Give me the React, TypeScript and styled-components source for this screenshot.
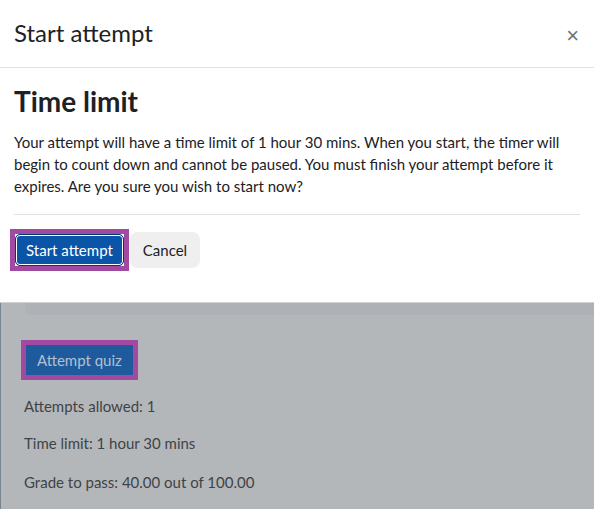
import React from "react";
import styled, { createGlobalStyle } from "styled-components";

const Global = createGlobalStyle`
  html, body { margin: 0; padding: 0; background: #ffffff; }
  body { font-family: Lato, "Noto Sans", "Liberation Sans", sans-serif; color: #1d2125; }
  * { box-sizing: border-box; }
`;

const Page = styled.div`
  width: 594px;
  height: 509px;
  display: flex;
  flex-direction: column;
  overflow: hidden;
`;

const Dialog = styled.div`
  background: #ffffff;
  display: flex;
  flex-direction: column;
  border-bottom: 1px solid #cfd1d3;
`;

const Header = styled.div`
  height: 68px;
  padding: 0 14px;
  display: flex;
  align-items: center;
  justify-content: space-between;
  border-bottom: 1px solid #dee2e6;
`;

const Title = styled.h5`
  margin: 0;
  font-size: 24px;
  font-weight: 400;
  color: #1d2125;
  line-height: 1.2;
  padding-bottom: 1px;
`;

const Close = styled.button`
  border: 0;
  background: transparent;
  color: #6a737b;
  font-size: 22px;
  line-height: 1;
  padding: 0;
  margin-right: 1px;
  margin-top: 5px;
  font-family: "Liberation Sans", sans-serif;
  cursor: pointer;
`;

const Body = styled.div`
  padding: 17px 14px 31px;
  display: flex;
  flex-direction: column;
`;

const Heading = styled.h3`
  margin: 0 0 12px;
  font-size: 28px;
  font-weight: 700;
  line-height: 1.2;
  color: #1d2125;
`;

const Text = styled.p`
  margin: 0;
  font-size: 15px;
  line-height: 22px;
  color: #1d2125;
`;

const Rule = styled.hr`
  margin: 17px 0 14px;
  border: 0;
  border-top: 1px solid #dee2e6;
`;

const Actions = styled.div`
  display: flex;
  align-items: center;
  margin-left: -4px;
`;

const FocusMark = styled.div`
  border: 5px solid #a04aa2;
  display: inline-flex;
`;

const PrimaryButton = styled.button`
  height: 32px;
  padding: 0 10px;
  background: #0b55a8;
  color: #ffffff;
  border: 1px solid #0a3570;
  box-shadow: inset 0 0 0 1px #ffffff;
  border-radius: 5px;
  font-family: inherit;
  font-size: 15px;
  cursor: pointer;
`;

const SecondaryButton = styled.button`
  height: 36px;
  margin-left: 1px;
  padding: 0 13px;
  background: #efeff0;
  color: #1d2125;
  border: 0;
  border-radius: 8px;
  font-family: inherit;
  font-size: 15px;
  cursor: pointer;
`;

const Backdrop = styled.div`
  flex: 1;
  background: #b4b7ba;
  border-left: 1px solid #78848e;
  display: flex;
  flex-direction: column;
`;

const CardEdge = styled.div`
  height: 12px;
  margin-left: 24px;
  background: #aeb1b5;
  border-bottom-left-radius: 6px;
`;

const Content = styled.div`
  padding: 25px 20px 0 20px;
  display: flex;
  flex-direction: column;
  align-items: flex-start;
`;

const DimButton = styled.div`
  height: 30px;
  padding: 0 11px;
  background: #1f5a9c;
  color: #b3c0d0;
  font-size: 15px;
  display: flex;
  align-items: center;
`;

const Info = styled.div<{ $gap: number }>`
  margin-left: 3px;
  margin-top: ${(p) => p.$gap}px;
  font-size: 15px;
  line-height: 22.5px;
  color: #3f4347;
`;

export default function App() {
  return (
    <>
      <Global />
      <Page>
        <Dialog>
          <Header>
            <Title>Start attempt</Title>
            <Close aria-label="Close">×</Close>
          </Header>
          <Body>
            <Heading>Time limit</Heading>
            <Text>
              Your attempt will have a time limit of 1 hour 30 mins. When you start, the timer will
              begin to count down and cannot be paused. You must finish your attempt before it
              expires. Are you sure you wish to start now?
            </Text>
            <Rule />
            <Actions>
              <FocusMark>
                <PrimaryButton>Start attempt</PrimaryButton>
              </FocusMark>
              <SecondaryButton>Cancel</SecondaryButton>
            </Actions>
          </Body>
        </Dialog>
        <Backdrop>
          <CardEdge />
          <Content>
            <FocusMark>
              <DimButton>Attempt quiz</DimButton>
            </FocusMark>
            <Info $gap={15}>Attempts allowed: 1</Info>
            <Info $gap={15}>Time limit: 1 hour 30 mins</Info>
            <Info $gap={16}>Grade to pass: 40.00 out of 100.00</Info>
          </Content>
        </Backdrop>
      </Page>
    </>
  );
}
